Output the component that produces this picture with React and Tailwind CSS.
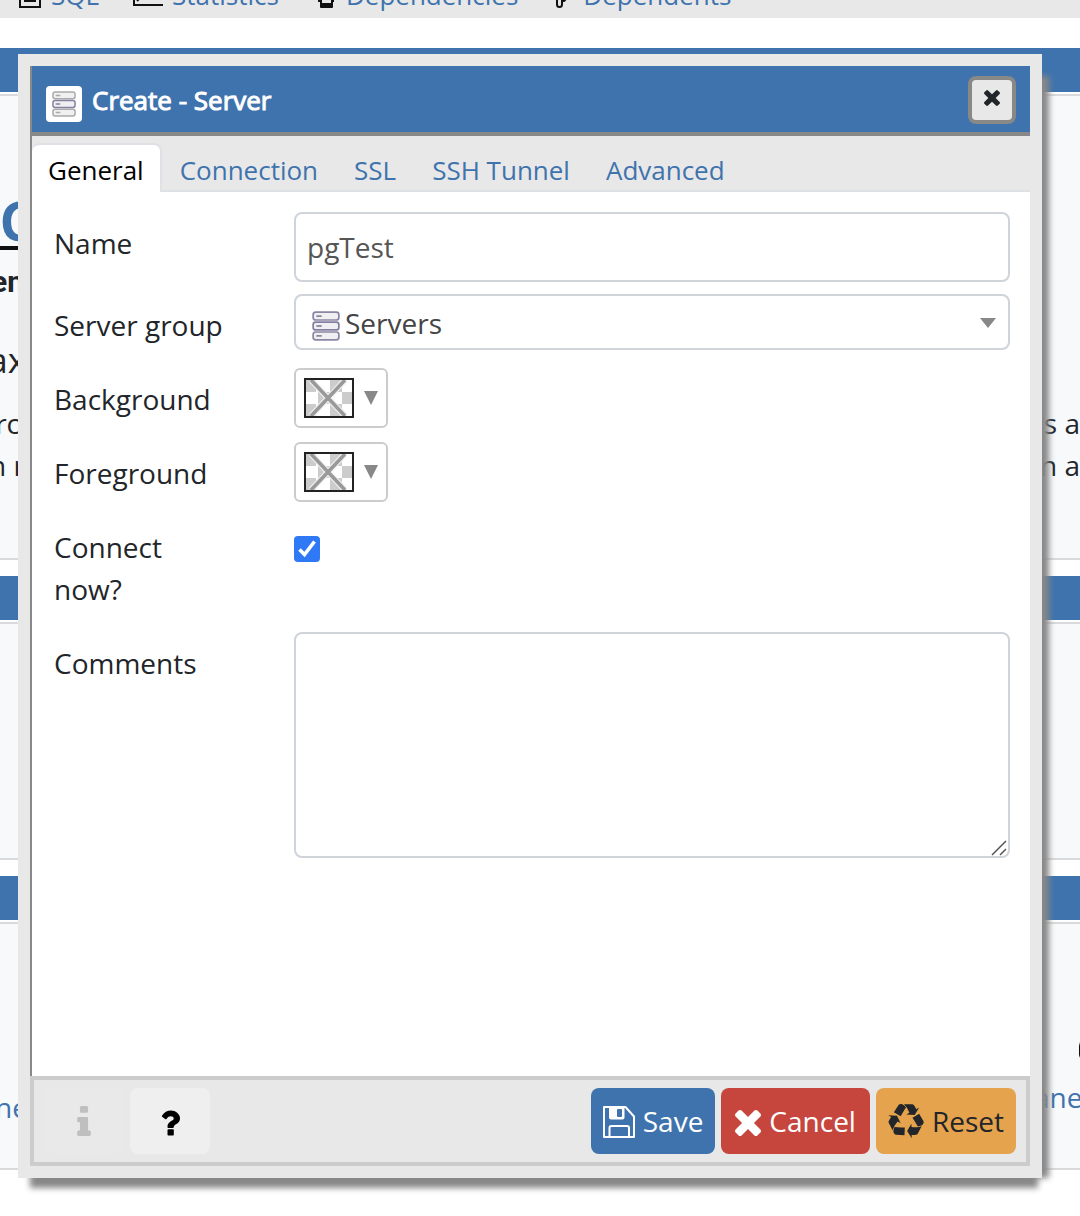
function TimesIcon({ className }) {
  return (
    <svg viewBox="302 366 1188 1188" className={className} fill="currentColor" aria-hidden="true">
      <path d="M1490 1322q0 40-28 68l-136 136q-28 28-68 28t-68-28l-294-294-294 294q-28 28-68 28t-68-28l-136-136q-28-28-28-68t28-68l294-294-294-294q-28-28-28-68t28-68l136-136q28-28 68-28t68 28l294 294 294-294q28-28 68-28t68 28l136 136q28 28 28 68t-28 68l-294 294 294 294q28 28 28 68z" />
    </svg>
  );
}

function InfoIcon() {
  return (
    <svg viewBox="576 128 640 1408" className="h-[30px] w-3.5" fill="currentColor" aria-hidden="true">
      <path d="M1216 1344v128q0 26-19 45t-45 19h-512q-26 0-45-19t-19-45v-128q0-26 19-45t45-19h64v-384h-64q-26 0-45-19t-19-45v-128q0-26 19-45t45-19h384q26 0 45 19t19 45v576h64q26 0 45 19t19 45zm-128-1152v192q0 26-19 45t-45 19h-256q-26 0-45-19t-19-45v-192q0-26 19-45t45-19h256q26 0 45 19t19 45z" />
    </svg>
  );
}

function QuestionIcon() {
  return (
    <svg viewBox="386 256 1018 1280" className="mt-1 h-[26px] w-5" fill="currentColor" aria-hidden="true">
      <path d="M1088 1256v240q0 16-12 28t-28 12h-240q-16 0-28-12t-12-28v-240q0-16 12-28t28-12h240q16 0 28 12t12 28zm316-600q0 54-15.500 101t-35 76.500-55 59.500-57.500 43.500-61 35.500q-41 23-68.500 65t-27.500 67q0 17-12 32.500t-28 15.500h-240q-15 0-25.500-18.500t-10.500-37.500v-45q0-83 65-156.500t143-108.500q59-27 84-56t25-76q0-42-46.500-74t-107.500-32q-65 0-108 29-35 25-107 115-13 16-31 16-12 0-25-8l-164-125q-13-10-15.500-25t5.500-28q160-266 464-266 80 0 161 31t146 83 106 127.500 41 158.500z" />
    </svg>
  );
}

function RecycleIcon() {
  return (
    <svg viewBox="0 0 1792 1792" className="mt-0.5 size-9" fill="currentColor" aria-hidden="true">
      <path d="M836 1169l-15 368-2 22-420-29q-36-3-67-31.500t-47-65.500q-11-27-14.500-55t4-65 12-55 21.500-64 19-53q78 12 509 28zm-387-586l180 379-147-92q-63 72-111.500 144.500t-72.500 125-39.500 94.500-18.500 63l-4 21-190-357q-17-26-18-56t6-47l8-18q35-63 114-188l-140-86zm1231 517l-188 359q-12 29-36.500 46.500t-43.500 20.500l-18 4q-71 7-219 12l8 164-230-367 211-362 7 173q170 16 283 5t170-33zm-785-924q-47 63-265 435l-317-187-19-12 225-356q20-31 60-45t80-10q24 2 48.500 12t42 21 41.500 33 36 34.500 36 39.500 32 35zm655 307l212 363q18 37 12.500 76t-27.500 74q-13 20-33 37t-38 28-48.500 22-47 16-51.500 14-46 12q-34-72-265-436l313-195zm-143-226l142-83-220 373-419-20 151-86q-34-89-75-166t-75.500-123.500-64.500-80-47-46.500l-17-13 405 1q31-3 58 10.500t39 28.500l11 15q39 61 112 190z" />
    </svg>
  );
}

function ServerIcon({ className, outer = "#8a86a3" }) {
  return (
    <svg viewBox="0 0 26 28" className={className} fill="#f0eff1" strokeWidth="1.6" aria-hidden="true">
      <rect x="1" y="1" width="24" height="7.4" rx="2.4" stroke={outer} />
      <rect x="1" y="10.3" width="24" height="7.4" rx="2.4" stroke="#8380a2" />
      <rect x="1" y="19.6" width="24" height="7.4" rx="2.4" stroke={outer} />
      <path d="M4 4.7h5M4 23.3h5" stroke={outer} />
      <path d="M4 14h5" stroke="#8380a2" />
    </svg>
  );
}

function SaveIcon() {
  return (
    <svg viewBox="0 0 32 32" className="mt-0.5 size-8" fill="none" stroke="currentColor" strokeWidth="2" aria-hidden="true">
      <path d="M1 1h21.5L31 10.500V31H1z" strokeLinejoin="round" />
      <path d="M6 1h15.500v10.500a2 2 0 0 1-2 2H8a2 2 0 0 1-2-2z" fill="currentColor" stroke="none" />
      <rect x="14" y="3" width="5" height="8" rx="1" fill="#3f73ad" stroke="none" />
      <path d="M6.500 31V22a2 2 0 0 1 2-2h15.500a2 2 0 0 1 2 2v9" />
    </svg>
  );
}

const navItems = [
  {
    label: "SQL",
    icon: (
      <svg viewBox="0 0 24 18" className="h-[18px] w-6" fill="none" stroke="#111" strokeWidth="2" aria-hidden="true">
        <path d="M2 -4V7h20V-4M6 1h12" />
      </svg>
    ),
  },
  {
    label: "Statistics",
    icon: (
      <svg viewBox="0 0 30 18" className="h-[18px] w-[30px]" fill="none" stroke="#111" strokeWidth="2" aria-hidden="true">
        <path d="M1 -4V5h29M4 1l3-3" />
      </svg>
    ),
  },
  {
    label: "Dependencies",
    icon: (
      <svg viewBox="0 0 24 18" className="h-[18px] w-6" fill="#111" aria-hidden="true">
        <path d="M5 -2h16v4h-1v5a1 1 0 0 1-1 1H8a1 1 0 0 1-1-1V2H5z" />
        <path d="M9 -1h9v4H9z" fill="#e8e8e8" />
      </svg>
    ),
  },
  {
    label: "Dependents",
    icon: (
      <svg viewBox="0 0 22 18" className="h-[18px] w-[22px]" fill="none" stroke="#111" strokeWidth="2" aria-hidden="true">
        <path d="M5 -3v7.500a2.500 2.500 0 0 0 5 0V1h2l3-3" />
      </svg>
    ),
  },
];

function Panel({ className, children }) {
  return (
    <section>
      <div className="h-11 bg-[#3f73ad]" />
      <div className={`mt-0.5 overflow-hidden border-y-2 border-[#d9dadc] bg-[#f8f9fb] ${className}`}>{children}</div>
    </section>
  );
}

function Backdrop() {
  return (
    <div>
      <nav className="flex h-[18px] items-end gap-[34px] overflow-hidden bg-[#e8e8e8] pl-[18px] text-[26px]">
        {navItems.map((item) => (
          <a key={item.label} href="#" className="flex items-end gap-[9px] text-[#3f73ad]">
            {item.icon}
            <span className="pb-[3px] leading-10">{item.label}</span>
          </a>
        ))}
      </nav>
      <div className="mt-[30px] flex flex-col gap-4">
        <Panel className="h-[466px] pt-[98px]">
          <div className="flex h-14 w-[34px] items-center justify-end border-b-4 border-[#111] text-[54px] font-bold text-[#3f73ad]">AC</div>
          <div className="flex h-[62px] w-6 items-center justify-end font-[Roboto] text-[30px] font-bold">en</div>
          <div className="flex h-24 w-[26px] items-center justify-end text-[35px]">ax</div>
          <div className="-mt-1.5 flex justify-between leading-[42px]">
            <span className="flex w-5 justify-end">rc</span>
            <span>s a</span>
          </div>
          <div className="flex justify-between leading-[42px] whitespace-nowrap">
            <span className="flex w-[25px] justify-end">n r</span>
            <span>n a</span>
          </div>
        </Panel>
        <Panel className="h-[238px]" />
        <Panel className="h-[248px] pt-[116px]">
          <div className="flex h-5 justify-end overflow-hidden">
            <svg viewBox="0 0 2 20" className="h-5 w-0.5" aria-hidden="true">
              <path d="M2 2v16l-1-3V6z" fill="#111" />
            </svg>
          </div>
          <div className="flex items-start justify-between leading-[42px] text-[#3f73ad]">
            <a href="#" className="mt-[26px] flex w-7 justify-end">ne</a>
            <a href="#" className="mt-4 w-[46px]">ane</a>
          </div>
        </Panel>
      </div>
    </div>
  );
}

function Row({ label, htmlFor, className = "", children }) {
  return (
    <div className={`flex min-h-[62px] items-start ${className}`}>
      <label htmlFor={htmlFor} className="w-60 shrink-0 pt-2.5 whitespace-nowrap">
        {label}
      </label>
      <div className="relative min-w-0 flex-1">{children}</div>
    </div>
  );
}

function ColorButton({ id }) {
  return (
    <button id={id} type="button" className="flex h-[60px] w-[94px] items-center gap-2.5 rounded-md border-2 border-[#ccc] bg-white pl-2">
      <svg viewBox="0 0 50 40" className="h-10 w-[50px]" aria-hidden="true">
        <rect width="50" height="40" fill="#fff" />
        <path d="M2 2h10v12H2zM26 2h12v12H26zM14 14h12v12H14zM38 14h10v12H38zM2 26h10v12H2zM26 26h12v12H26z" fill="#ccc" />
        <path d="M7 2l34 36M41 2L7 38" stroke="#eee" strokeWidth="6" />
        <path d="M7 2l34 36M41 2L7 38" stroke="#999" strokeWidth="3.500" />
        <rect x="1" y="1" width="48" height="38" fill="none" stroke="#222" strokeWidth="2" />
      </svg>
      <svg viewBox="0 0 14 14" className="size-3.5" fill="#888" aria-hidden="true">
        <path d="M0 0h14L7 14z" />
      </svg>
    </button>
  );
}

const tabs = ["Connection", "SSL", "SSH Tunnel", "Advanced"];

function Dialog() {
  return (
    <div
      role="dialog"
      aria-labelledby="dialog-title"
      className="flex min-h-[1124px] flex-col border-[12px] border-[#e8e8e8] bg-white shadow-[18px_11px_6px_-11px_#888,4px_18px_6px_-8px_#888]"
    >
      <div className="flex flex-1 flex-col border-l-2 border-[#888]">
        <header className="flex h-[70px] items-start justify-between border-b-4 border-[#888] bg-[#3f73ad] px-3.5 pt-2.5">
          <div className="flex items-start gap-2.5">
            <span className="mt-2.5 flex size-9 items-center justify-center rounded-sm bg-white">
              <ServerIcon className="h-[26px] w-6" outer="#aaa" />
            </span>
            <h1 id="dialog-title" className="text-[26px] leading-[48px] text-white [-webkit-text-stroke:1px_#fff]">Create - Server</h1>
          </div>
          <button type="button" aria-label="Close" className="flex size-12 justify-center rounded-lg border-4 border-[#888] bg-[#e8e8e8] pt-2.5 text-[#222529]">
            <TimesIcon className="size-4" />
          </button>
        </header>
        <div role="tablist" className="flex h-14 items-end bg-[#e8e8e8] text-[26px]">
          <button role="tab" aria-selected="true" type="button" className="h-[49px] rounded-t-lg border-t-2 border-r-2 border-[#dee2e6] bg-white px-4 pt-1 text-black">
            General
          </button>
          <div className="flex h-14 flex-1 items-end gap-9 border-b-2 border-[#dee2e6] pl-[18px]">
            {tabs.map((tab) => (
              <button key={tab} role="tab" aria-selected="false" type="button" className="h-[47px] pt-2 text-[#3f73ad]">
                {tab}
              </button>
            ))}
          </div>
        </div>
        <form className="flex flex-1 flex-col gap-3 py-5 pr-5 pl-[22px] leading-[42px]">
          <Row label="Name" htmlFor="name">
            <input id="name" type="text" defaultValue="pgTest" className="block h-[70px] w-full rounded-lg border-2 border-[#ced4da] px-[11px] text-[#555]" />
          </Row>
          <Row label="Server group" htmlFor="group">
            <select id="group" className="block h-14 w-full appearance-none rounded-lg border-2 border-[#ced4da] bg-white pt-0.5 pl-[49px] text-[#444]">
              <option>Servers</option>
            </select>
            <ServerIcon className="pointer-events-none absolute top-[17px] left-[18px] h-[30px] w-7" />
            <svg viewBox="0 0 16 10" className="pointer-events-none absolute top-6 right-3.5 h-2.5 w-4" fill="#888" aria-hidden="true">
              <path d="M0 0h16L8 10z" />
            </svg>
          </Row>
          <Row label="Background" htmlFor="bg">
            <ColorButton id="bg" />
          </Row>
          <Row label="Foreground" htmlFor="fg">
            <ColorButton id="fg" />
          </Row>
          <Row label={<>Connect<br />now?</>} htmlFor="connect" className="pb-2.5">
            <input id="connect" type="checkbox" defaultChecked className="mt-5 block size-[26px] appearance-none rounded bg-[#2f78f6]" />
            <svg viewBox="0 0 26 26" className="pointer-events-none absolute top-5 left-0 size-[26px]" fill="none" stroke="#fff" strokeWidth="3.600" aria-hidden="true">
              <path d="M5.500 13.500l5 5L20.500 5.500" />
            </svg>
          </Row>
          <Row label="Comments" htmlFor="comments">
            <textarea id="comments" className="block h-[226px] w-full resize-none rounded-lg border-2 border-[#ced4da] p-3" />
            <svg viewBox="0 0 16 16" className="pointer-events-none absolute right-[3px] bottom-[2px] size-4" stroke="#555" strokeWidth="1.500" aria-hidden="true">
              <path d="M1 15L15 1M9 15l6-6" />
            </svg>
          </Row>
        </form>
      </div>
      <footer className="flex items-center gap-1.5 border-4 border-[#ccc] bg-[#e8e8e8] px-2.5 py-2">
        <button type="button" disabled aria-label="Info" className="flex h-[66px] w-20 items-center justify-center rounded-lg bg-[#e9e9e9] text-[#bfbfbf]">
          <InfoIcon />
        </button>
        <button type="button" aria-label="Help" className="flex h-[66px] w-20 items-center justify-center rounded-lg bg-[#efefef] text-black">
          <QuestionIcon />
        </button>
        <div className="ml-auto flex gap-1.5">
          <button type="button" className="flex h-[66px] items-center gap-2 rounded-lg bg-[#3f73ad] px-3 text-white">
            <SaveIcon />
            Save
          </button>
          <button type="button" className="flex h-[66px] items-center gap-2 rounded-lg bg-[#c6463e] pr-3.5 pl-3.5 text-white">
            <TimesIcon className="mt-1 size-[26px]" />
            Cancel
          </button>
          <button type="button" className="flex h-[66px] items-center gap-2 rounded-lg bg-[#e4a34c] px-3 text-[#222529]">
            <RecycleIcon />
            Reset
          </button>
        </div>
      </footer>
    </div>
  );
}

export default function App() {
  return (
    <div className="relative min-h-screen overflow-hidden bg-white font-['Open_Sans',sans-serif] text-[28px] text-[#222529]">
      <Backdrop />
      <div className="absolute inset-x-0 top-[54px] pr-[38px] pl-[18px]">
        <Dialog />
      </div>
    </div>
  );
}
